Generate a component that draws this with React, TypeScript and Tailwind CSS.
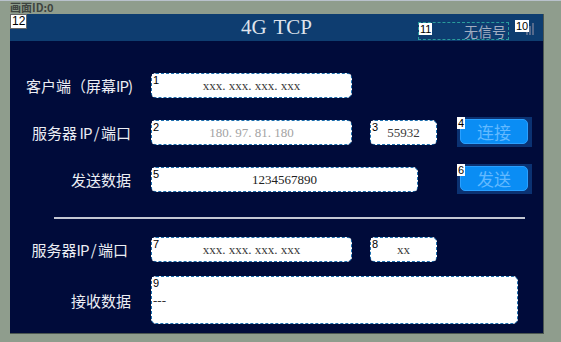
import React from "react";

const Badge = ({ n, className = "" }: { n: string; className?: string }) => (
  <span
    className={
      "absolute left-0 top-0 bg-white text-black text-[11px] leading-[12px] px-[1px] font-['Liberation_Sans',sans-serif] " +
      className
    }
  >
    {n}
  </span>
);

const Field = ({
  n,
  w,
  h = 25,
  text,
  color = "text-[#3a3a3a]",
  align = "center",
}: {
  n: string;
  w: string;
  h?: number;
  text: string;
  color?: string;
  align?: "center" | "left";
}) => (
  <div
    className={
      "relative shrink-0 bg-white rounded-[5px] border border-dashed border-[#1d6fae] flex items-center font-['Liberation_Serif',serif] text-[13px] " +
      w +
      " " +
      color +
      (align === "center" ? " justify-center" : " justify-start pl-[1px]")
    }
    style={{ height: h }}
  >
    <Badge n={n} className="bg-transparent text-[#333]" />
    <span className="leading-none">{text}</span>
  </div>
);

const Button = ({ n, text }: { n: string; text: string }) => (
  <div className="relative shrink-0 w-[75px] h-[30px] bg-[#0b3272] pl-[3px] pr-[4px] pt-[2px] pb-[3px]">
    <Badge n={n} />
    <div className="w-full h-full rounded-[5px] bg-[#0a8df4] border border-[#2aa0ff] flex items-center justify-center text-[17px] text-[#62b9ff] font-['Noto_Sans_CJK_SC',sans-serif] leading-none">
      {text}
    </div>
  </div>
);

const Label = ({ children, pr = "pr-0" }: { children: React.ReactNode; pr?: string }) => (
  <div
    className={
      "w-[122px] shrink-0 text-right text-[15px] text-[#eceef4] font-['Noto_Sans_CJK_SC',sans-serif] leading-none mr-[19px] whitespace-nowrap " +
      pr
    }
  >
    {children}
  </div>
);

const Tight = ({ children }: { children: React.ReactNode }) => (
  <span className="tracking-[-1px]">{children}</span>
);

export default function App() {
  return (
    <div className="w-[561px] h-[342px] bg-[#8f9d8d] overflow-hidden flex flex-col border-t border-[#b9c2cc]">
      <div className="h-[13px] pl-[10px] text-[11px] font-bold leading-[13px] text-[#3e4440] font-['Noto_Sans_CJK_SC',sans-serif]">
        画面ID:0
      </div>
      <div className="ml-[10px] w-[534px] h-[320px] bg-[#000b3a] border-r border-b border-[#4b5750] flex flex-col">
        {/* header */}
        <div className="relative h-[27px] bg-[#0e3d70] flex items-center justify-center">
          <span className="absolute left-0 top-0 bg-white text-black text-[12px] leading-[13px] px-[1px] border border-[#666] font-['Liberation_Sans',sans-serif]">
            12
          </span>
          <span className="font-['Liberation_Serif',serif] text-[21px] text-[#dfe3ec] leading-none [word-spacing:2px]">
            4G TCP
          </span>
          <div className="absolute right-[8px] top-[8px] flex items-start">
            <div className="relative w-[91px] h-[18px] border border-dashed border-[#2a9c9c] flex items-center justify-end pr-[2px] text-[14px] text-[#a2adc2] font-['Noto_Sans_CJK_SC',sans-serif] leading-none">
              <span className="absolute left-0 top-0 bg-white text-black text-[11px] leading-[12px] px-[1px] font-['Liberation_Sans',sans-serif]">
                11
              </span>
              无信号
            </div>
            <div className="relative ml-[6px] -mt-[2px] w-[20px] h-[16px]">
              <div className="absolute left-[11px] top-[3px] flex items-end gap-[1px] h-[12px]">
                <div className="w-[2px] h-[6px] bg-[#566a8c]" />
                <div className="w-[2px] h-[9px] bg-[#566a8c]" />
                <div className="w-[2px] h-[12px] bg-[#566a8c]" />
              </div>
              <span className="absolute left-0 top-0 bg-white text-black text-[11px] leading-[12px] px-[1px] font-['Liberation_Sans',sans-serif]">
                10
              </span>
            </div>
          </div>
        </div>

        {/* body */}
        <div className="flex flex-col">
          <div className="mt-[32px] h-[25px] flex items-center">
            <Label>
              客户端（屏幕<Tight>IP)</Tight>
            </Label>
            <Field n="1" w="w-[201px]" text="xxx. xxx. xxx. xxx" />
          </div>

          <div className="mt-[19px] h-[30px] flex items-center">
            <Label pr="pr-[1px]">
              服务器<Tight> IP / </Tight>端口
            </Label>
            <Field n="2" w="w-[201px]" text="180. 97. 81. 180" color="text-[#a3a3a3]" />
            <div className="ml-[18px]">
              <Field n="3" w="w-[67px]" text="55932" color="text-[#3a3a3a]" />
            </div>
            <div className="ml-[20px]">
              <Button n="4" text="连接" />
            </div>
          </div>

          <div className="mt-[17px] h-[30px] flex items-center">
            <Label pr="pr-[1px]">发送数据</Label>
            <Field n="5" w="w-[267px]" text="1234567890" color="text-[#222]" />
            <div className="ml-[39px]">
              <Button n="6" text="发送" />
            </div>
          </div>

          <div className="mt-[23px] ml-[44px] w-[471px] h-[2px] bg-[#c3c7d2]" />

          <div className="mt-[18px] h-[25px] flex items-center">
            <Label pr="pr-[4px]">
              服务器<Tight>IP / </Tight>端口
            </Label>
            <Field n="7" w="w-[201px]" text="xxx. xxx. xxx. xxx" />
            <div className="ml-[18px]">
              <Field n="8" w="w-[67px]" text="xx" />
            </div>
          </div>

          <div className="mt-[14px] h-[48px] flex items-center">
            <Label pr="pr-[1px]">接收数据</Label>
            <Field n="9" w="w-[367px]" h={48} text="---" align="left" color="text-[#333]" />
          </div>
        </div>
      </div>
    </div>
  );
}
